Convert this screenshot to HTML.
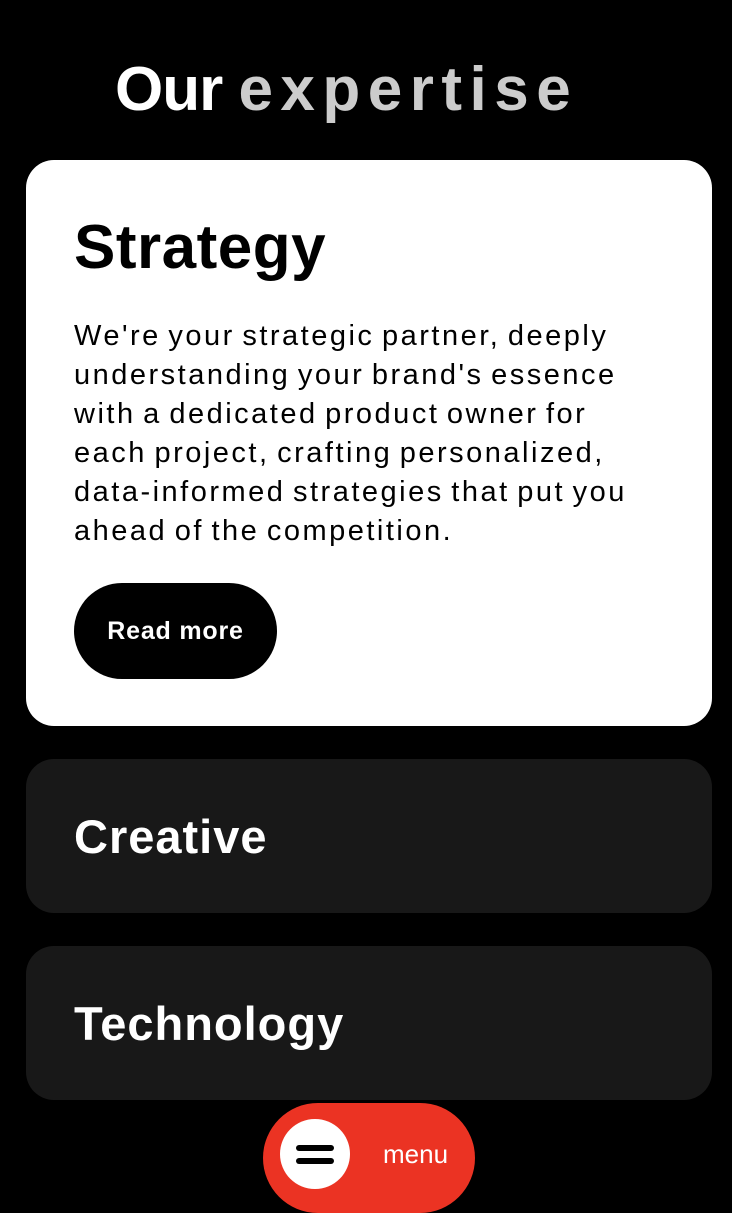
<!DOCTYPE html>
<html><head><style>
*{margin:0;padding:0;box-sizing:border-box}
body{width:732px;height:1204px;background:#000;font-family:"Liberation Sans",sans-serif;position:relative;overflow:hidden}
h1{position:absolute;left:115px;top:54px;font-size:62px;font-weight:700;color:#fff;letter-spacing:-1px;white-space:nowrap}
h1 span{color:#ccc;letter-spacing:7.5px}
.card{position:absolute;left:26px;width:686px;border-radius:28px}
.w{top:160px;height:566px;background:#fff}
.w h2{position:absolute;left:48px;top:52px;font-size:62px;font-weight:700;letter-spacing:0.5px;color:#000}
.w p{position:absolute;left:48px;top:157px;white-space:nowrap;font-size:29px;line-height:39px;color:#000;letter-spacing:2.5px;word-spacing:-3px}
.btn{position:absolute;left:48px;top:423px;width:203px;height:96px;border-radius:48px;background:#000;color:#fff;font-weight:700;font-size:25px;line-height:96px;text-align:center;letter-spacing:0.8px}
.d{background:#181818;height:154px}
.d h2{position:absolute;left:48px;top:50px;font-size:47px;font-weight:700;color:#fff;letter-spacing:1px}
.menu{position:absolute;left:263px;top:1103px;width:212px;height:110px;border-radius:55px;background:#eb3323}
.circ{position:absolute;left:17px;top:16px;width:70px;height:70px;border-radius:50%;background:#fff}
.bar{position:absolute;left:16px;width:38px;height:6px;background:#000;border-radius:3px}
.menu .t{position:absolute;left:120px;top:36px;color:#fff;font-size:26px}
</style></head><body>
<h1>Our&nbsp;<span>expertise</span></h1>
<div class="card w"><h2>Strategy</h2>
<p>We're your strategic partner, deeply<br>understanding your brand's essence<br>with a dedicated product owner for<br>each project, crafting personalized,<br>data-informed strategies that put you<br>ahead of the competition.</p>
<div class="btn">Read more</div></div>
<div class="card d" style="top:759px"><h2>Creative</h2></div>
<div class="card d" style="top:946px"><h2>Technology</h2></div>
<div class="menu"><div class="circ"><div class="bar" style="top:26px"></div><div class="bar" style="top:39px"></div></div><div class="t">menu</div></div>
</body></html>
